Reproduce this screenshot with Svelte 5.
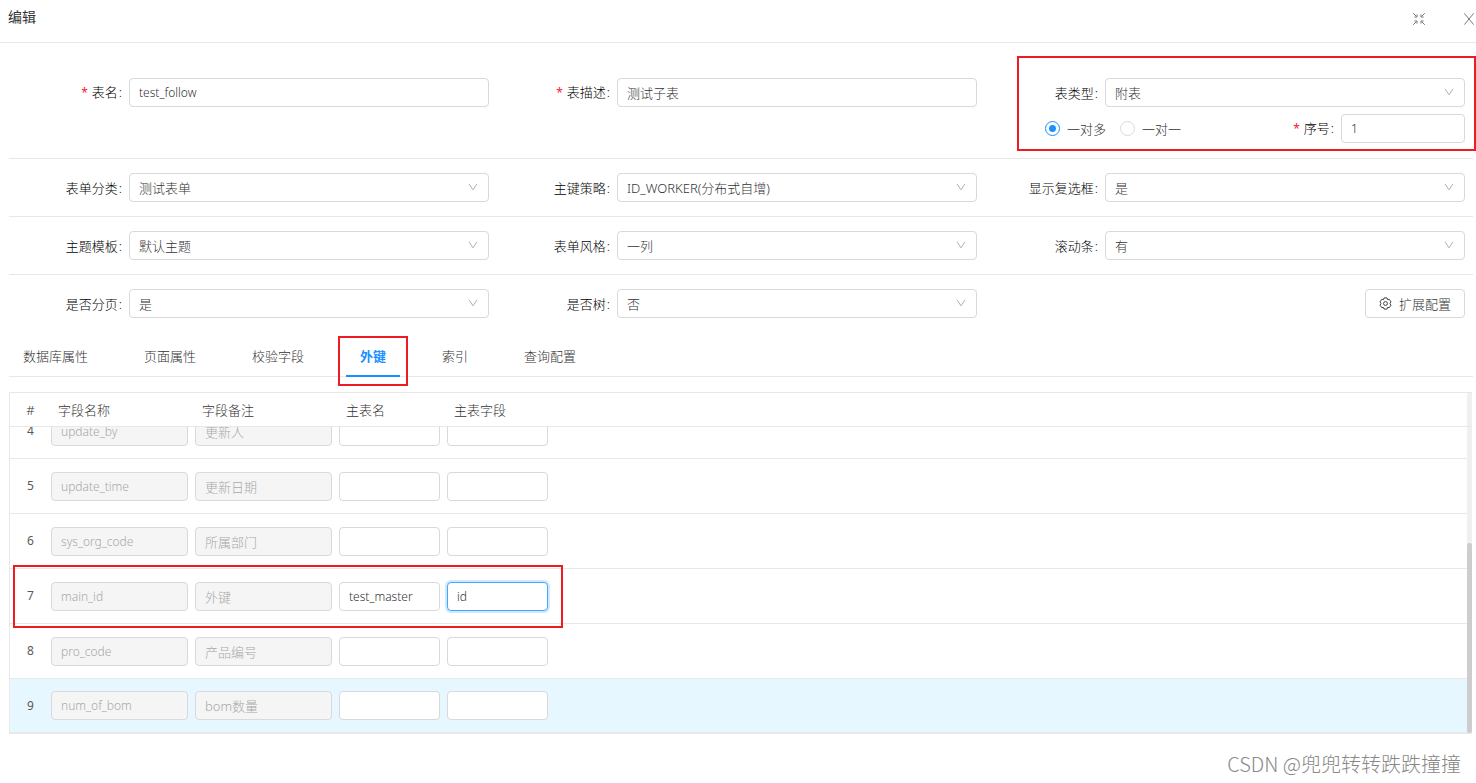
<script>
	let tableName = $state('test_follow');
	let tableDesc = $state('测试子表');
	let relation = $state('many');
	let order = $state('1');
	let activeTab = $state('外键');

	const settings = [
		[
			{ id: 'category', label: '表单分类', value: '测试表单' },
			{ id: 'idType', label: '主键策略', value: 'ID_WORKER(分布式自增)' },
			{ id: 'checkbox', label: '显示复选框', value: '是' }
		],
		[
			{ id: 'theme', label: '主题模板', value: '默认主题' },
			{ id: 'formStyle', label: '表单风格', value: '一列' },
			{ id: 'scroll', label: '滚动条', value: '有' }
		],
		[
			{ id: 'paging', label: '是否分页', value: '是' },
			{ id: 'tree', label: '是否树', value: '否' }
		]
	];

	const tabs = ['数据库属性', '页面属性', '校验字段', '外键', '索引', '查询配置'];

	let rows = $state([
		{ no: 4, name: 'update_by', note: '更新人', table: '', field: '' },
		{ no: 5, name: 'update_time', note: '更新日期', table: '', field: '' },
		{ no: 6, name: 'sys_org_code', note: '所属部门', table: '', field: '' },
		{ no: 7, name: 'main_id', note: '外键', table: 'test_master', field: 'id' },
		{ no: 8, name: 'pro_code', note: '产品编号', table: '', field: '' },
		{ no: 9, name: 'num_of_bom', note: 'bom数量', table: '', field: '' }
	]);
</script>

{#snippet dropdown(id, value)}
	<div class="select">
		<select {id}>
			<option>{value}</option>
		</select>
		<svg viewBox="0 0 10 8" width="10" height="8" aria-hidden="true">
			<path d="M1 0.8 L5 6.8 L9 0.8" />
		</svg>
	</div>
{/snippet}

{#snippet columns()}
	<colgroup>
		<col class="col-no" />
		<col class="col-wide" />
		<col class="col-wide" />
		<col class="col-narrow" />
		<col class="col-narrow" />
		<col />
	</colgroup>
{/snippet}

<header class="title-bar">
	<h1>编辑</h1>
	<div class="window-actions">
		<button aria-label="exit fullscreen">
			<svg viewBox="0 0 14 14" width="14" height="14">
				<path d="M1.2 1.2 L4.6 4.6 M12.8 1.2 L9.4 4.6 M1.2 12.8 L4.6 9.4 M12.8 12.8 L9.4 9.4" />
				<path d="M2.4 5 H5 V2.4 M11.6 5 H9 V2.4 M2.4 9 H5 V11.6 M11.6 9 H9 V11.6" />
			</svg>
		</button>
		<button aria-label="close">
			<svg viewBox="0 0 14 14" width="14" height="14">
				<path d="M2.4 1.4 L11.6 12.6 M11.6 1.4 L2.4 12.6" />
			</svg>
		</button>
	</div>
</header>

<main>
	<form>
		<div class="form-row first">
			<div class="field">
				<label class="required" for="tableName">表名</label>
				<input id="tableName" class="code" bind:value={tableName} />
			</div>
			<div class="field">
				<label class="required" for="tableDesc">表描述</label>
				<input id="tableDesc" bind:value={tableDesc} />
			</div>
			<div class="type-group">
				<div class="field">
					<label for="tableType">表类型</label>
					{@render dropdown('tableType', '附表')}
				</div>
				<div class="relation">
					<label class="radio">
						<input type="radio" name="relation" value="many" bind:group={relation} />一对多
					</label>
					<label class="radio">
						<input type="radio" name="relation" value="one" bind:group={relation} />一对一
					</label>
					<div class="order">
						<label class="required" for="order">序号</label>
						<input id="order" class="code" bind:value={order} />
					</div>
				</div>
				<div class="mark mark-type"></div>
			</div>
		</div>

		{#each settings as group, i}
			<div class="form-row">
				{#each group as item}
					<div class="field">
						<label for={item.id}>{item.label}</label>
						{@render dropdown(item.id, item.value)}
					</div>
				{/each}
				{#if i === settings.length - 1}
					<div class="extend">
						<button type="button" class="btn">
							<svg viewBox="0 0 14 14" width="13" height="13" aria-hidden="true">
								<path d="M5.4 1 H8.6 L9.2 2.8 L11 2.5 L12.9 5.2 L11.8 7 L12.9 8.8 L11 11.5 L9.2 11.2 L8.6 13 H5.4 L4.8 11.2 L3 11.5 L1.1 8.8 L2.2 7 L1.1 5.2 L3 2.5 L4.8 2.8 Z" />
								<circle cx="7" cy="7" r="2.1" />
							</svg>
							扩展配置
						</button>
					</div>
				{/if}
			</div>
		{/each}
	</form>

	<nav class="tabs">
		{#each tabs as tab}
			<button class="tab" class:active={tab === activeTab} onclick={() => (activeTab = tab)}>
				{tab}
				{#if tab === '外键'}
					<span class="mark mark-tab"></span>
				{/if}
			</button>
		{/each}
	</nav>

	<section class="grid">
		<div class="pane">
			<table>
				{@render columns()}
				<thead>
					<tr>
						<th class="no">#</th>
						<th>字段名称</th>
						<th>字段备注</th>
						<th>主表名</th>
						<th>主表字段</th>
						<th></th>
					</tr>
				</thead>
			</table>
			<div class="track"></div>
		</div>
		<div class="pane body">
			<table>
				{@render columns()}
				<tbody>
					{#each rows as row}
						<tr class:hover={row.no === 9}>
							<td class="no">{row.no}</td>
							<td><input class="code" aria-label="字段名称" value={row.name} disabled /></td>
							<td><input aria-label="字段备注" value={row.note} disabled /></td>
							<td><input class="code" aria-label="主表名" bind:value={row.table} /></td>
							<td>
								<input
									class="code"
									class:focused={row.no === 7}
									aria-label="主表字段"
									bind:value={row.field}
								/>
							</td>
							<td>
								{#if row.no === 7}
									<div class="mark mark-row"></div>
								{/if}
							</td>
						</tr>
					{/each}
				</tbody>
			</table>
			<div class="track"><div class="thumb"></div></div>
		</div>
	</section>
</main>

<footer>CSDN @兜兜转转跌跌撞撞</footer>

<style>
	:global(body) {
		background: #fff;
		color: #333;
		font-family: 'Noto Sans', 'Noto Sans CJK SC', sans-serif;
		font-size: 13px;
		font-weight: 300;
		line-height: 20px;
	}

	input,
	select,
	button {
		box-sizing: border-box;
		font: inherit;
		color: inherit;
	}

	button {
		padding: 0;
		border: none;
		background: none;
		cursor: pointer;
	}

	svg {
		fill: none;
		stroke: currentColor;
	}

	.title-bar {
		display: flex;
		justify-content: space-between;
		height: 42px;
		padding-left: 8px;
		border-bottom: 1px solid #e8e8e8;
		overflow: hidden;
	}

	h1 {
		margin: 7px 0 0;
		font-size: 14px;
		font-weight: 400;
		line-height: 20px;
		color: #333;
	}

	.window-actions {
		display: flex;
		align-items: center;
		gap: 36px;
		height: 38px;
		color: #7a7a7a;
	}

	.window-actions svg {
		display: block;
	}

	main {
		padding: 0 3px 0 9px;
	}

	.form-row {
		display: grid;
		grid-template-columns: repeat(3, 1fr);
		padding: 14px 0;
		border-bottom: 1px solid #e8e8e8;
	}

	.form-row.first {
		align-items: start;
		padding: 35px 0 15px;
	}

	.form-row:last-child {
		border-bottom: none;
	}

	.field {
		display: grid;
		grid-template-columns: 120px 1fr;
		align-items: center;
		padding-right: 8px;
	}

	.field label,
	.order label {
		padding-right: 7px;
		text-align: right;
		color: #000;
	}

	.field label::after,
	.order label::after {
		content: ':';
		margin-left: 1px;
	}

	.required::before {
		content: '*';
		margin-right: 4px;
		font-size: 12px;
		font-weight: 400;
		color: #f5222d;
	}

	input:not([type='radio']),
	select {
		width: 100%;
		height: 29px;
		padding: 0 9px;
		border: 1px solid #d9d9d9;
		border-radius: 4px;
		background: #fff;
		outline: none;
		appearance: none;
	}

	input.code {
		font-size: 12px;
	}

	.select {
		position: relative;
	}

	.select svg {
		position: absolute;
		top: 10px;
		right: 11px;
		color: #b0b0b0;
		pointer-events: none;
	}

	.type-group {
		position: relative;
		display: grid;
		gap: 7px;
	}

	.relation {
		display: flex;
		align-items: center;
		gap: 14px;
		padding: 0 8px 0 60px;
	}

	.radio {
		display: flex;
		align-items: center;
		gap: 7px;
	}

	.radio input {
		width: 15px;
		height: 15px;
		margin: 0;
		border: 1px solid #d9d9d9;
		border-radius: 50%;
		background: #fff;
		appearance: none;
	}

	.radio input:checked {
		border-color: #1890ff;
		background: radial-gradient(circle, #1890ff 3px, #fff 4px);
	}

	.order {
		display: grid;
		grid-template-columns: auto 124px;
		align-items: center;
		margin-left: auto;
	}

	.extend {
		display: flex;
		justify-content: flex-end;
		padding-right: 8px;
	}

	.btn {
		display: flex;
		align-items: center;
		gap: 7px;
		height: 29px;
		padding: 0 13px;
		border: 1px solid #d9d9d9;
		border-radius: 4px;
	}

	.tabs {
		display: flex;
		gap: 28px;
		height: 44px;
		border-bottom: 1px solid #e8e8e8;
	}

	.tab {
		position: relative;
		padding: 4px 14px 0;
		border-bottom: 2px solid transparent;
		margin-bottom: -1px;
	}

	.tab.active {
		border-color: #1890ff;
		font-weight: 700;
		color: #1890ff;
	}

	.mark {
		position: absolute;
		box-sizing: border-box;
		border: 2px solid #ed1c24;
		pointer-events: none;
	}

	.mark-type {
		inset: -22px -3px -8px 32px;
	}

	.mark-tab {
		inset: 4px -8px -11px;
	}

	.mark-row {
		top: -4px;
		bottom: -4px;
		left: 3px;
		width: 550px;
	}

	.grid {
		margin: 15px 1px 0 0;
		border: solid #e8e8e8;
		border-width: 1px 0 0 1px;
	}

	.pane {
		display: flex;
		border-bottom: 1px solid #e8e8e8;
	}

	.pane.body {
		align-items: flex-end;
		height: 306px;
		overflow: hidden;
	}

	table {
		flex: 1;
		table-layout: fixed;
		width: 100%;
		border-spacing: 0;
	}

	.col-no {
		width: 41px;
	}

	.col-wide {
		width: 144px;
	}

	.col-narrow {
		width: 108px;
	}

	th {
		height: 33px;
		padding: 0 7px;
		text-align: left;
		font-weight: 300;
	}

	tbody tr {
		position: relative;
	}

	td {
		box-sizing: border-box;
		height: 55px;
		padding: 0 7px 0 0;
		border-bottom: 1px solid #e8e8e8;
	}

	tr:last-child td {
		height: 54px;
	}

	th.no,
	td.no {
		padding: 0;
		text-align: center;
	}

	td.no {
		font-size: 12px;
		font-weight: 400;
		color: #595959;
	}

	tr.hover td {
		background: #e6f7ff;
	}

	td input:disabled {
		background: #f5f5f5;
		color: #a8a8a8;
	}

	td input.focused:not([type='radio']) {
		border-color: #40a9ff;
		box-shadow: 0 0 0 2px rgba(24, 144, 255, 0.2);
	}

	.track {
		display: flex;
		flex: 0 0 5px;
		align-self: stretch;
		align-items: flex-end;
		background: #f0f0f0;
	}

	.thumb {
		width: 5px;
		height: 62%;
		border-radius: 2px;
		background: #cdcdcd;
	}

	footer {
		padding: 16px 15px 0 0;
		text-align: right;
		font-family: 'Noto Sans CJK SC', sans-serif;
		font-size: 20px;
		line-height: 28px;
		color: #888;
	}
</style>
